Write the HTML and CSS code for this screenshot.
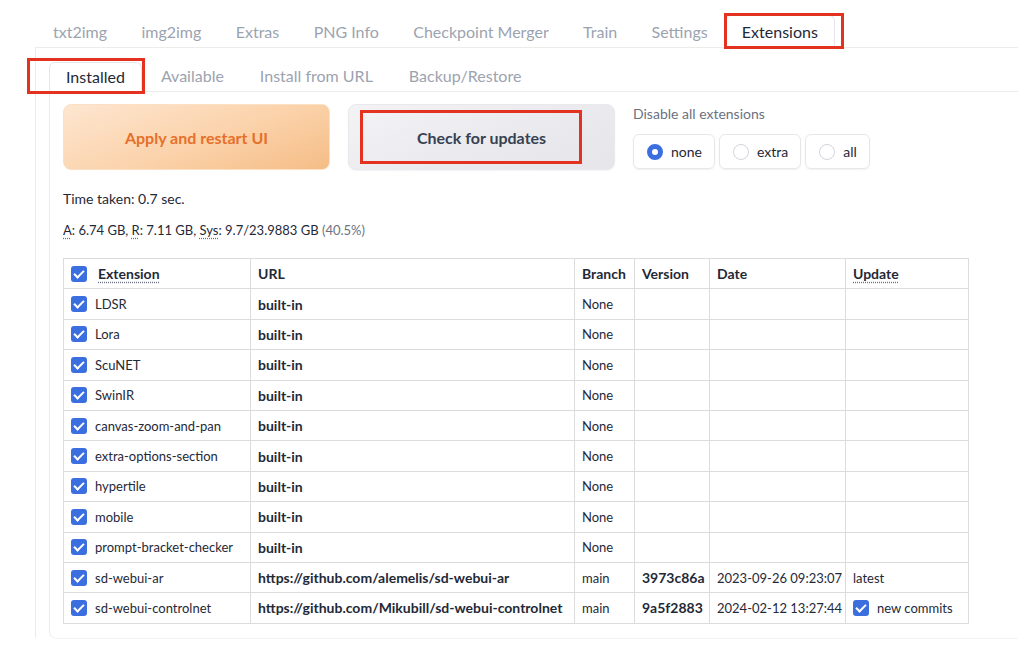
FILE: index.html
```html
<!DOCTYPE html>
<html>
<head>
<meta charset="utf-8">
<link rel="stylesheet" href="styles.css">
</head>
<body>
<div class="app">
  <div class="topnav">
    <span class="tab">txt2img</span>
    <span class="tab">img2img</span>
    <span class="tab">Extras</span>
    <span class="tab">PNG Info</span>
    <span class="tab">Checkpoint Merger</span>
    <span class="tab">Train</span>
    <span class="tab">Settings</span>
    <span class="tab tab-sel">Extensions<span class="mark mark-ext"></span></span>
  </div>
  <div class="outer">
    <div class="subnav">
      <span class="stab stab-sel">Installed<span class="mark mark-inst"></span></span>
      <span class="stab">Available</span>
      <span class="stab">Install from URL</span>
      <span class="stab">Backup/Restore</span>
    </div>
    <div class="inner">
      <div class="controls">
        <button class="btn btn-primary">Apply and restart UI</button>
        <button class="btn btn-secondary">Check for updates<span class="mark mark-check"></span></button>
        <div class="radio-block">
          <div class="radio-label">Disable all extensions</div>
          <div class="radios">
            <label class="radio"><span class="dot dot-on"></span>none</label>
            <label class="radio"><span class="dot"></span>extra</label>
            <label class="radio"><span class="dot"></span>all</label>
          </div>
        </div>
      </div>
      <p class="info">Time taken: 0.7 sec.</p>
      <p class="info info-mem"><abbr>A</abbr>: 6.74 GB, <abbr>R</abbr>: 7.11 GB, <abbr>Sys</abbr>: 9.7/23.9883 GB <span class="muted">(40.5%)</span></p>
      <table class="ext">
        <colgroup>
          <col class="c1"><col class="c2"><col class="c3"><col class="c4"><col class="c5"><col class="c6">
        </colgroup>
        <thead>
          <tr>
            <th><span class="cb"></span><abbr class="hdr-first">Extension</abbr></th>
            <th>URL</th>
            <th>Branch</th>
            <th>Version</th>
            <th>Date</th>
            <th><abbr>Update</abbr></th>
          </tr>
        </thead>
        <tbody>
          <tr><td><span class="cb"></span>LDSR</td><td class="b">built-in</td><td>None</td><td></td><td></td><td></td></tr>
          <tr><td><span class="cb"></span>Lora</td><td class="b">built-in</td><td>None</td><td></td><td></td><td></td></tr>
          <tr><td><span class="cb"></span>ScuNET</td><td class="b">built-in</td><td>None</td><td></td><td></td><td></td></tr>
          <tr><td><span class="cb"></span>SwinIR</td><td class="b">built-in</td><td>None</td><td></td><td></td><td></td></tr>
          <tr><td><span class="cb"></span>canvas-zoom-and-pan</td><td class="b">built-in</td><td>None</td><td></td><td></td><td></td></tr>
          <tr><td><span class="cb"></span>extra-options-section</td><td class="b">built-in</td><td>None</td><td></td><td></td><td></td></tr>
          <tr><td><span class="cb"></span>hypertile</td><td class="b">built-in</td><td>None</td><td></td><td></td><td></td></tr>
          <tr><td><span class="cb"></span>mobile</td><td class="b">built-in</td><td>None</td><td></td><td></td><td></td></tr>
          <tr><td><span class="cb"></span>prompt-bracket-checker</td><td class="b">built-in</td><td>None</td><td></td><td></td><td></td></tr>
          <tr><td><span class="cb"></span>sd-webui-ar</td><td class="b">https://github.com/alemelis/sd-webui-ar</td><td>main</td><td class="b">3973c86a</td><td>2023-09-26 09:23:07</td><td>latest</td></tr>
          <tr><td><span class="cb"></span>sd-webui-controlnet</td><td class="b">https://github.com/Mikubill/sd-webui-controlnet</td><td>main</td><td class="b">9a5f2883</td><td>2024-02-12 13:27:44</td><td><span class="cb"></span>new commits</td></tr>
        </tbody>
      </table>
    </div>
  </div>
</div>
</body>
</html>
```

FILE: styles.css
```css
* { box-sizing: border-box; }
html, body { margin: 0; padding: 0; background: #fff; }
body {
  font-family: "Lato", "Noto Sans", sans-serif;
  color: #1f2937;
  width: 1024px;
  height: 653px;
  overflow: hidden;
}
.app { position: relative; padding-top: 16px; }

.topnav {
  display: flex;
  margin-left: 35px;
  width: 983px;
  height: 32px;
  border-bottom: 1px solid #ececec;
}
.tab {
  position: relative;
  font-size: 16px;
  line-height: 31px;
  padding: 0 17.2px;
  color: #9ca3af;
}
.tab:first-child { padding-left: 18px; }
.tab-sel {
  color: #1f2937;
  background: #fff;
  border: 1px solid #e5e7eb;
  border-bottom: none;
  border-radius: 6px 6px 0 0;
  height: 33px;
  padding: 0 16px;
  margin-top: -1px;
}

.outer {
  margin-left: 35px;
  width: 983px;
  height: 590px;
  border-left: 1px solid #ececec;
  padding-left: 13px;
  padding-top: 14px;
}
.subnav {
  display: flex;
  height: 30px;
  border-bottom: 1px solid #ececec;
}
.stab {
  position: relative;
  font-size: 16px;
  line-height: 28px;
  padding: 0 17px;
  color: #9ca3af;
  margin-right: 2px;
}
.stab-sel {
  color: #1f2937;
  background: #fff;
  border: 1px solid #e5e7eb;
  border-bottom: none;
  border-radius: 6px 6px 0 0;
  height: 31px;
  padding: 0 16px;
}

.inner {
  border-left: 1px solid #ececec;
  border-bottom: 1px solid #f3f3f3;
  border-bottom-left-radius: 8px;
  height: 547px;
  padding: 12px 0 0 13px;
}

.controls {
  display: flex;
  gap: 18px;
  align-items: flex-start;
}
.btn {
  position: relative;
  width: 267px;
  height: 66px;
  border-radius: 8px;
  font-family: inherit;
  font-size: 16px;
  font-weight: 700;
  cursor: pointer;
}
.btn-primary {
  background: linear-gradient(160deg, #fde6d0 0%, #fbd2aa 55%, #f5bd86 100%);
  border: 1px solid #fbe0c4;
  color: #e6702a;
}
.btn-secondary {
  background: linear-gradient(160deg, #f3f3f6 0%, #eaeaee 60%, #e5e5ea 100%);
  border: 1px solid #e9e9ec;
  color: #374151;
  box-shadow: 0 1px 2px rgba(0,0,0,0.05);
}
.radio-block { padding-top: 1px; }
.radio-label {
  font-size: 14px;
  color: #6b7280;
  line-height: 18px;
  margin-bottom: 11px;
}
.radios { display: flex; gap: 4px; }
.radio {
  display: flex;
  align-items: center;
  height: 35px;
  padding: 0 12px 0 13px;
  border: 1px solid #e5e7eb;
  border-radius: 6px;
  box-shadow: 0 1px 2px rgba(0,0,0,0.06);
  font-size: 14px;
  color: #1f2937;
  gap: 8px;
}
.dot {
  width: 16px;
  height: 16px;
  border-radius: 50%;
  border: 1px solid #d1d5db;
  background: #fff;
}
.dot-on {
  border: 5px solid #3b6fe0;
  background: #fff;
}

.info {
  margin: 0;
  font-size: 14px;
  line-height: 18px;
}
.info:first-of-type { margin-top: 20px; }
.info + .info { margin-top: 13px; }
.info-mem { font-size: 13px; }
abbr {
  text-decoration: underline dotted;
  text-underline-offset: 3px;
  text-decoration-color: #6b7280;
}
.muted { color: #6b7280; }

.ext {
  margin-top: 19px;
  border-collapse: collapse;
  table-layout: fixed;
  width: 905px;
  font-size: 13px;
}
.c1 { width: 187px; }
.c2 { width: 324px; }
.c3 { width: 60px; }
.c4 { width: 75px; }
.c5 { width: 136px; }
.c6 { width: 123px; }
.ext th, .ext td {
  border: 1px solid #dcdcdc;
  height: 30.4px;
  padding: 0 7px;
  text-align: left;
  white-space: nowrap;
  vertical-align: middle;
}
.ext th { font-weight: 700; font-size: 14px; }
.ext td.b { font-weight: 700; font-size: 14px; }
.hdr-first { margin-left: 3px; }
.cb {
  display: inline-block;
  width: 16px;
  height: 16px;
  border-radius: 3px;
  background: #3b6fe0;
  vertical-align: -3px;
  margin-right: 8px;
  position: relative;
}
.cb::after {
  content: "";
  position: absolute;
  left: 5px;
  top: 2px;
  width: 4px;
  height: 8px;
  border: solid #fff;
  border-width: 0 2px 2px 0;
  transform: rotate(45deg);
}

.mark {
  position: absolute;
  border: 3px solid #e3321f;
  pointer-events: none;
}
.mark-ext { left: -2px; top: -3px; width: 120px; height: 36px; }
.mark-inst { left: -23px; top: -5px; width: 118px; height: 36px; }
.mark-check { left: 11px; top: 5px; width: 222px; height: 54px; }
```
